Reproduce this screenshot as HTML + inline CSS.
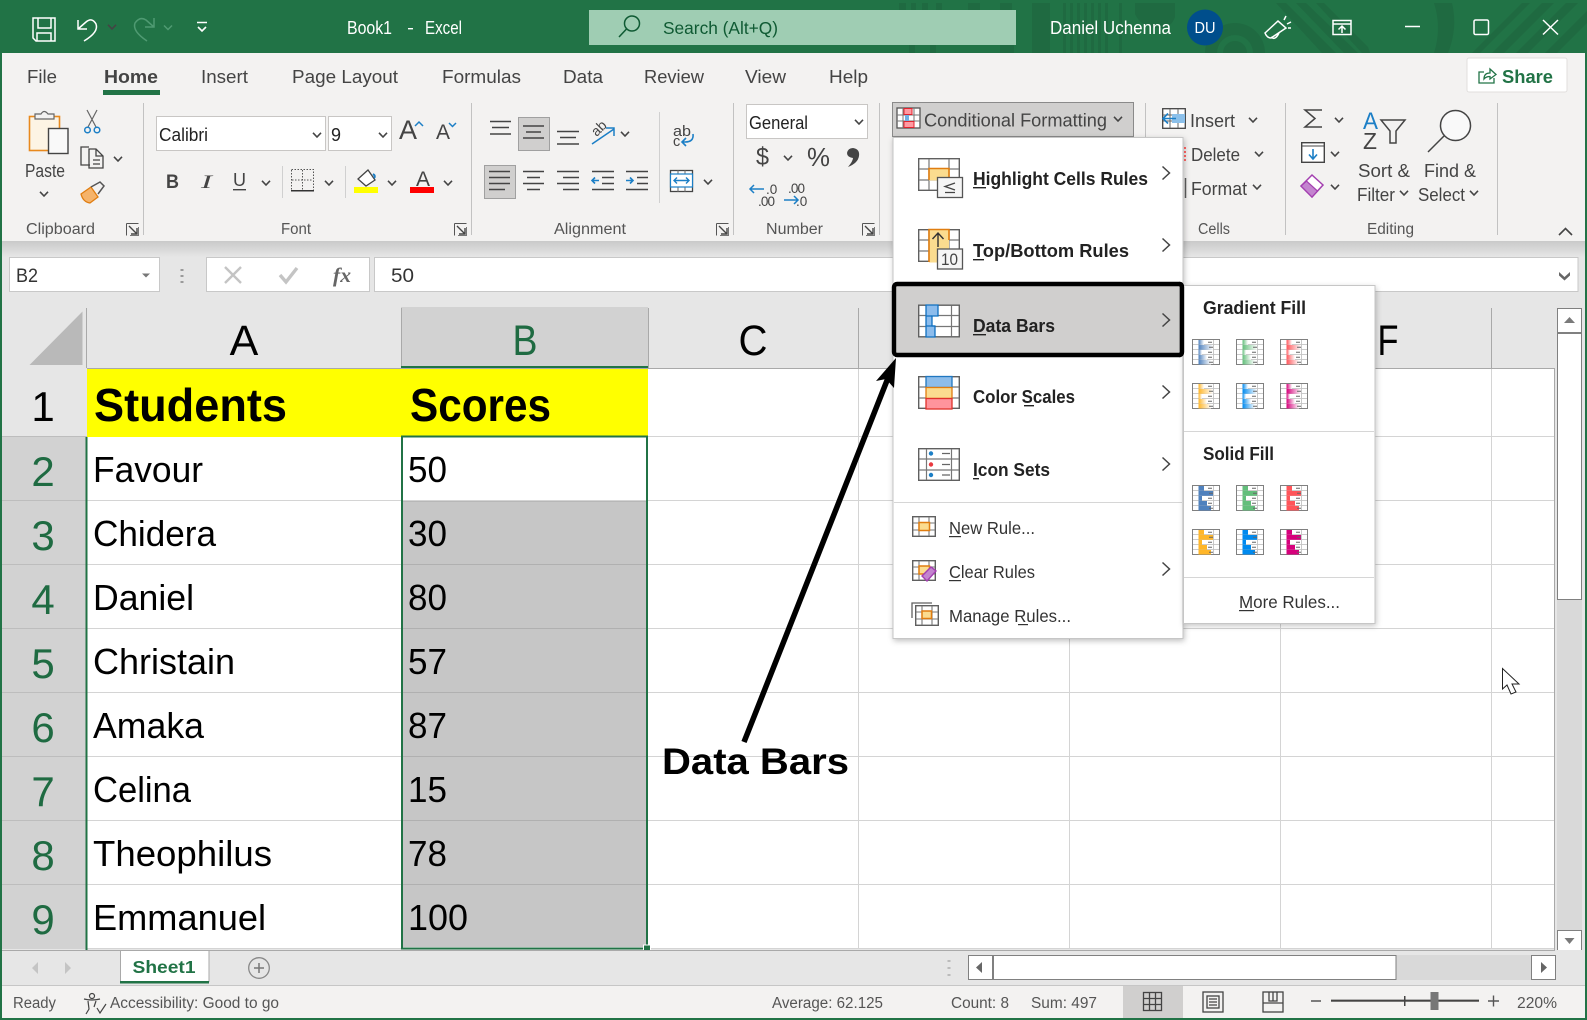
<!DOCTYPE html>
<html><head><meta charset="utf-8"><title>Book1 - Excel</title>
<style>
html,body{margin:0;padding:0;background:#fff;width:1587px;height:1020px;overflow:hidden}
svg{display:block;font-family:"Liberation Sans",sans-serif}
text{white-space:pre}
.t{fill:#fff;font-size:18.5px}
.r{fill:#444;font-size:18px}
.g{fill:#555;font-size:15.5px}
.m{fill:#222;font-size:18.5px;font-weight:700}
.n{fill:#333;font-size:17.5px}
.st{fill:#555;font-size:15.5px}
.cell{fill:#000;font-size:36px}
.hd{fill:#000;font-size:43px;text-anchor:middle}
.rn{fill:#1f6b42;font-size:42px;text-anchor:middle}
.line{stroke:#444;stroke-width:1.6;fill:none}
.ch{stroke:#444;stroke-width:1.6;fill:none}
</style></head><body>
<svg width="1587" height="1020" viewBox="0 0 1587 1020" xmlns="http://www.w3.org/2000/svg">
<defs>
<linearGradient id="sh" x1="0" y1="0" x2="0" y2="1"><stop offset="0" stop-color="#c9c9c9"/><stop offset="1" stop-color="#e6e6e6"/></linearGradient>
<linearGradient id="g1"><stop offset="0" stop-color="#4f81bd"/><stop offset="1" stop-color="#fff"/></linearGradient>
<linearGradient id="g2"><stop offset="0" stop-color="#63be7b"/><stop offset="1" stop-color="#fff"/></linearGradient>
<linearGradient id="g3"><stop offset="0" stop-color="#ff555a"/><stop offset="1" stop-color="#fff"/></linearGradient>
<linearGradient id="g4"><stop offset="0" stop-color="#ffb628"/><stop offset="1" stop-color="#fff"/></linearGradient>
<linearGradient id="g5"><stop offset="0" stop-color="#008aef"/><stop offset="1" stop-color="#fff"/></linearGradient>
<linearGradient id="g6"><stop offset="0" stop-color="#d6007b"/><stop offset="1" stop-color="#fff"/></linearGradient>
<path id="ch" class="ch" d="M-4-2.2 0 2 4-2.2"/>
<path id="sub" d="M-3.5-6.5 3.5 0-3.5 6.5" fill="none" stroke="#444" stroke-width="1.5"/>
<g id="launch"><path d="M.5 .5H12.5M.5 .5V12.5" stroke="#555" fill="none"/><path d="M3 3 10.5 10.5M5 11H11V5" stroke="#444" stroke-width="1.4" fill="none"/><path d="M12.5 4V12.5H4" stroke="#777" fill="none"/></g>
<g id="dbar">
<rect x=".5" y=".5" width="27" height="25" fill="#fff" stroke="#808080"/>
<path d="M7 1V25M21.5 1V25M1 5.6H27M1 10.6H27M1 15.6H27M1 20.6H27" stroke="#c4c4c4" stroke-width=".9" fill="none"/>
<rect x="6.500" y="1" width="5.500" height="4.800" style="fill:var(--c)"/><rect x="6.500" y="6" width="14.500" height="4.800" style="fill:var(--c)"/><rect x="6.500" y="11" width="3.500" height="4.800" style="fill:var(--c)"/><rect x="6.500" y="16" width="8.500" height="4.800" style="fill:var(--c)"/><rect x="6.500" y="21" width="12.500" height="4.500" style="fill:var(--c)"/>
<path d="M16 3.200H20M17 8.200H21M16 13.200H20M16 18.200H20M17 23.200H21" stroke="#666" stroke-width="1"/>
</g>
<g id="grid42"><rect x=".7" y=".7" width="40.6" height="31.6" fill="#fff" stroke="#606060" stroke-width="1.4"/><path d="M8.500 1V32M33.500 1V32M1 11H41M1 22H41" stroke="#777" stroke-width="1.2" fill="none"/></g>
<g id="grid42b"><rect x=".7" y=".7" width="40.6" height="31.6" fill="#fff" stroke="#606060" stroke-width="1.4"/><path d="M11 1V32M31 1V32M1 11H41M1 22H41" stroke="#777" stroke-width="1.2" fill="none"/></g>
<g id="grid24"><rect x=".7" y=".7" width="22.6" height="19.6" fill="#fff" stroke="#606060" stroke-width="1.4"/><path d="M7 1V20M17 1V20M1 7H23M1 14H23" stroke="#777" stroke-width="1.1" fill="none"/></g>
</defs>

<rect width="1587" height="1020" fill="#217346"/>
<!-- title pattern -->
<g fill="#1f6a41">
<rect x="899" y="3" width="7" height="7"/><rect x="911" y="3" width="5" height="7"/><rect x="922" y="3" width="6" height="7"/><rect x="936" y="3" width="6" height="7"/><rect x="968" y="3" width="12" height="7"/><rect x="1000" y="3" width="12" height="7"/>
<rect x="909" y="45" width="6" height="8"/><rect x="930" y="45" width="6" height="8"/><rect x="1000" y="45" width="14" height="8"/>
<rect x="1032" y="3" width="18" height="50"/>
<rect x="1063" y="3" width="3" height="50"/><rect x="1070" y="3" width="3" height="50"/><rect x="1077" y="3" width="3" height="50"/><rect x="1084" y="3" width="3" height="50"/><rect x="1091" y="3" width="3" height="50"/><rect x="1098" y="3" width="3" height="50"/><rect x="1105" y="3" width="3" height="50"/><rect x="1119" y="3" width="3" height="50"/>
<path d="M1135 3h40v14q-4 12-18 11-16-1-22-14z"/>
<path d="M1205 53a30 30 0 0 1 60 0h-12a18 18 0 0 0-36 0z"/>
<path d="M1223 53a12 12 0 0 1 24 0z"/>
<path d="M1276 3h10l50 50h-14zM1296 3h10l52 50h-14zM1316 3h8l44 44 2 6h-8z"/>
<path d="M1434 3h18q6 25-4 50h-14q8-25 0-50z"/>
<path d="M1472 53 1522 3h8l-50 50zM1492 53 1542 3h12l-50 50zM1516 53 1566 3h12l-50 50zM1545 53l42-42v12l-30 30z"/>
</g>
<!-- QAT -->
<g fill="none" stroke="#fff" stroke-width="1.5">
<path d="M33 18H55V41H36L33 38Z"/><path d="M38 18V28H51V18M37 41V33H51V41"/>
<path d="M78 20V29H87M78 29 86 22Q92 17 96 24 99 32 84 41"/>
</g>
<use href="#ch" transform="translate(112,27)" style="stroke:#fff"/>
<g fill="none" stroke="#4f9a72" stroke-width="1.5"><path d="M154 18V27H145M154 27 146 20Q140 16 135 23 132 31 147 41"/></g>
<path d="M164 25.500 168 29.500 172 25.500" fill="none" stroke="#4f9a72" stroke-width="1.5"/>
<path d="M197 22.500H207M198 27 202 31 206 27" fill="none" stroke="#fff" stroke-width="1.6"/>
<text class="t" x="347" y="34" textLength="45" lengthAdjust="spacingAndGlyphs">Book1</text>
<rect x="408" y="28" width="5" height="1.4" fill="#fff"/>
<text class="t" x="425" y="34" textLength="37" lengthAdjust="spacingAndGlyphs">Excel</text>
<rect x="589" y="10" width="427" height="35" fill="#9fcdb3"/>
<g fill="none" stroke="#0f5a33" stroke-width="1.5"><circle cx="632" cy="23.500" r="7.500"/><path d="M626.500 29 619 37"/></g>
<text x="663" y="34" font-size="17.500" fill="#0f5a33" textLength="115" lengthAdjust="spacingAndGlyphs">Search (Alt+Q)</text>
<text class="t" x="1050" y="34" textLength="121" lengthAdjust="spacingAndGlyphs">Daniel Uchenna</text>
<circle cx="1205" cy="27.500" r="18" fill="#004e8c"/>
<text x="1205" y="33" font-size="15.500" fill="#fff" text-anchor="middle" textLength="21" lengthAdjust="spacingAndGlyphs">DU</text>
<g fill="none" stroke="#fff" stroke-width="1.5">
<path d="M1265 33 1278 21 1286 28 1271 38Q1267 38 1265 33ZM1271 37Q1275 41 1279 33"/><path d="M1284 20 1286 16M1287 24 1291 22M1288 28H1291"/>
<rect x="1333" y="20.500" width="18" height="14"/><path d="M1333 24H1351M1342 33V26M1338.500 29.500 1342 26 1345.500 29.500"/>
<path d="M1405 26.500H1420"/><rect x="1474" y="20" width="14.500" height="14.500" rx="1.5"/><path d="M1543 20 1558 34.500M1558 20 1543 34.500"/>
</g>

<!-- ribbon -->
<rect x="2" y="53" width="1583" height="188" fill="#f3f2f1"/>
<rect x="2" y="241" width="1583" height="709" fill="#e6e6e6"/>
<rect x="2" y="241" width="1583" height="16" fill="url(#sh)"/>
<rect x="1467" y="58" width="100" height="34" rx="2" fill="#fff" stroke="#e1dfdd"/>
<g fill="none" stroke="#217346" stroke-width="1.300"><path d="M1484 72H1479V83H1494V78M1484 79Q1484 73 1490 73V69L1496 74.500 1490 79V76.500Q1486 76.500 1484 79Z"/></g>
<text x="1502" y="83" font-size="18.500" font-weight="700" fill="#217346" textLength="51" lengthAdjust="spacingAndGlyphs">Share</text>

<text class="r" x="27" y="83" textLength="30" lengthAdjust="spacingAndGlyphs">File</text>
<text class="r" x="104" y="83" font-weight="700" fill="#333" textLength="54" lengthAdjust="spacingAndGlyphs">Home</text>
<rect x="103" y="90" width="57" height="5" fill="#217346"/>
<text class="r" x="201" y="83" textLength="47" lengthAdjust="spacingAndGlyphs">Insert</text>
<text class="r" x="292" y="83" textLength="106" lengthAdjust="spacingAndGlyphs">Page Layout</text>
<text class="r" x="442" y="83" textLength="79" lengthAdjust="spacingAndGlyphs">Formulas</text>
<text class="r" x="563" y="83" textLength="40" lengthAdjust="spacingAndGlyphs">Data</text>
<text class="r" x="644" y="83" textLength="60" lengthAdjust="spacingAndGlyphs">Review</text>
<text class="r" x="745" y="83" textLength="41" lengthAdjust="spacingAndGlyphs">View</text>
<text class="r" x="829" y="83" textLength="39" lengthAdjust="spacingAndGlyphs">Help</text>

<!-- separators -->
<path d="M143.500 103V235M471.500 103V235M733.500 103V235M879.500 103V235M1145.500 103V235M1285.500 103V235M1497.500 103V235" stroke="#c2c2c2" stroke-width="1"/>
<path d="M282.500 166V198M345.500 166V198M659.500 112V203" stroke="#d0d0d0"/>

<!-- clipboard -->
<rect x="29.500" y="116.500" width="30" height="34" fill="#fdf4e4" stroke="#e8891d" stroke-width="1.6"/>
<path d="M35 119V114H41Q44 109 48 114H54V119Z" fill="#f3f2f1" stroke="#666" stroke-width="1.2"/>
<rect x="48.500" y="128.500" width="19.500" height="25" fill="#f9f9f9" stroke="#444" stroke-width="1.4"/>
<text class="r" x="25" y="177" textLength="40" lengthAdjust="spacingAndGlyphs">Paste</text>
<use href="#ch" x="44" y="194"/>
<g fill="none" stroke="#666" stroke-width="1.2"><path d="M87 110 96 127M97 110 88 127"/></g>
<g fill="none" stroke="#1c7fc6" stroke-width="1.5"><circle cx="87.500" cy="130" r="2.800"/><circle cx="97" cy="130" r="2.800"/></g>
<g fill="none" stroke="#444" stroke-width="1.3"><path d="M90 165H81V147H89"/><path d="M89 149H96L103 156V168H89ZM96 149V156H103M93 160H100M93 164H100"/></g>
<use href="#ch" x="118" y="159"/>
<path d="M81 194 91 187 98 197 90 203Q83 202 81 194Z" fill="#f5b36a" stroke="#e07d10" stroke-width="1.3"/>
<path d="M91 187 100 182 104 186 98 194" fill="none" stroke="#555" stroke-width="1.5"/>
<text class="g" x="26" y="234" textLength="69" lengthAdjust="spacingAndGlyphs">Clipboard</text>
<use href="#launch" x="126" y="223"/>

<!-- font -->
<rect x="156.500" y="116.500" width="169" height="34" fill="#fff" stroke="#c8c6c4"/>
<rect x="328.500" y="116.500" width="63" height="34" fill="#fff" stroke="#c8c6c4"/>
<text x="159" y="141" font-size="18" fill="#222" textLength="49" lengthAdjust="spacingAndGlyphs">Calibri</text>
<text x="331" y="141" font-size="18" fill="#222" textLength="10" lengthAdjust="spacingAndGlyphs">9</text>
<use href="#ch" x="317" y="135" style="stroke:#222"/><use href="#ch" x="383" y="135" style="stroke:#222"/>
<text x="399" y="139" font-size="27" fill="#444" textLength="18" lengthAdjust="spacingAndGlyphs">A</text>
<path d="M415 126 419 122 423 126" fill="none" stroke="#1c7fc6" stroke-width="1.5"/>
<text x="436" y="139" font-size="21" fill="#444" textLength="14" lengthAdjust="spacingAndGlyphs">A</text>
<path d="M449 123 452.500 126.500 456 123" fill="none" stroke="#1c7fc6" stroke-width="1.5"/>
<text x="166" y="188" font-size="19" font-weight="700" fill="#444" textLength="13" lengthAdjust="spacingAndGlyphs">B</text>
<text x="201" y="188" font-size="19" font-style="italic" fill="#444" font-family="Liberation Serif" textLength="11" lengthAdjust="spacingAndGlyphs">I</text>
<text x="233" y="186" font-size="18" fill="#444" textLength="13" lengthAdjust="spacingAndGlyphs">U</text>
<rect x="233" y="189" width="13" height="1.4" fill="#444"/>
<use href="#ch" x="266" y="183"/>
<g fill="none" stroke="#555" stroke-dasharray="1.5 1.5"><rect x="291.500" y="169.500" width="22" height="21"/><path d="M302.500 170V190M292 180H313"/></g><rect x="291" y="190" width="23" height="1.500" fill="#333"/>
<use href="#ch" x="329" y="183"/>
<path d="M358 179 368 170 375 180 366 186Z" fill="#fff" stroke="#444" stroke-width="1.300"/><path d="M374 178Q376 176 373 174" stroke="#1c7fc6" stroke-width="2" fill="none"/>
<rect x="354" y="187" width="24" height="6" fill="#ff0"/>
<use href="#ch" x="392" y="183"/>
<text x="416" y="186" font-size="21" fill="#444" textLength="14" lengthAdjust="spacingAndGlyphs">A</text>
<rect x="410" y="187" width="24" height="6" fill="#f00"/>
<use href="#ch" x="448" y="183"/>
<text class="g" x="281" y="234" textLength="30" lengthAdjust="spacingAndGlyphs">Font</text>
<use href="#launch" x="454" y="223"/>

<!-- alignment -->
<path class="line" d="M490 121.500H511M492 127.500H509M490 134H511"/>
<rect x="518.500" y="117.500" width="31" height="33" fill="#d0cfce" stroke="#a0a0a0"/>
<path class="line" d="M523 126H544M526 132H541M523 138H544"/>
<path class="line" d="M557 131.500H579M560 137.500H576M557 144H579"/>
<g fill="none"><text x="592" y="134" font-size="14" fill="#444" transform="rotate(-45 598 130)">ab</text><path d="M592 144 614 129M606 128H614V136" stroke="#1c7fc6" stroke-width="1.500"/></g>
<use href="#ch" x="625" y="134"/>
<rect x="484.500" y="165.500" width="31" height="33" fill="#d0cfce" stroke="#a0a0a0"/>
<path class="line" d="M489 171.500H510M489 177.500H510M489 183.500H510M489 189.500H505"/>
<path class="line" d="M523 171.500H544M527 177.500H540M523 183.500H544M527 189.500H540"/>
<path class="line" d="M557 171.500H579M563 177.500H579M557 183.500H579M563 189.500H579"/>
<path class="line" d="M592 171.500H614M602 177.500H614M602 183.500H614M592 189.500H614"/>
<path d="M599 180.500H592M595 177.500 592 180.500 595 183.500" fill="none" stroke="#1c7fc6" stroke-width="1.600"/>
<path class="line" d="M626 171.500H648M637 177.500H648M637 183.500H648M626 189.500H648"/>
<path d="M626 180.500H633M630 177.500 633 180.500 630 183.500" fill="none" stroke="#1c7fc6" stroke-width="1.600"/>
<text x="673" y="136" font-size="14.500" fill="#444" textLength="18" lengthAdjust="spacingAndGlyphs">ab</text>
<text x="673" y="146" font-size="14.500" fill="#444">c</text>
<path d="M693 134Q694 142 685 142H682M686 138 682 142 686 146" fill="none" stroke="#1c7fc6" stroke-width="1.600"/>
<rect x="670.500" y="170.500" width="22" height="21" fill="#fff" stroke="#444" stroke-width="1.300"/>
<path d="M670 175H693M670 186H693M678 170V175M685 170V175M678 186V192M685 186V192" stroke="#666" fill="none"/>
<rect x="670.500" y="174" width="22" height="13" fill="#fff" stroke="#1c7fc6" stroke-width="1.200"/>
<path d="M674 180.500H689M677 177.500 674 180.500 677 183.500M686 177.500 689 180.500 686 183.500" fill="none" stroke="#1c7fc6" stroke-width="1.400"/>
<use href="#ch" x="708" y="182"/>
<text class="g" x="554" y="234" textLength="72" lengthAdjust="spacingAndGlyphs">Alignment</text>
<use href="#launch" x="716" y="223"/>

<!-- number -->
<rect x="746.500" y="104.500" width="121" height="34" fill="#fff" stroke="#c8c6c4"/>
<text x="749" y="129" font-size="18" fill="#222" textLength="59" lengthAdjust="spacingAndGlyphs">General</text>
<use href="#ch" x="859" y="122" style="stroke:#222"/>
<text x="756" y="165" font-size="25" fill="#444" textLength="13" lengthAdjust="spacingAndGlyphs">$</text>
<use href="#ch" x="788" y="158"/>
<text x="807" y="166" font-size="26" fill="#444" textLength="23" lengthAdjust="spacingAndGlyphs">%</text>
<path d="M853 148Q860 149 859 156 858 163 848 167 853 161 853 158 847 157 847 153 848 148 853 148Z" fill="#444"/>
<text x="766" y="194" font-size="13.500" fill="#444">.0</text><text x="758" y="206" font-size="13.500" fill="#444" textLength="17">.00</text>
<path d="M750 189H764M754 185 750 189 754 193" stroke="#1c7fc6" stroke-width="1.500" fill="none"/>
<text x="788" y="193" font-size="13.500" fill="#444" textLength="17">.00</text><text x="796" y="206" font-size="13.500" fill="#444">.0</text>
<path d="M784 200H798M794 196 798 200 794 204" stroke="#1c7fc6" stroke-width="1.500" fill="none"/>
<text class="g" x="766" y="234" textLength="57" lengthAdjust="spacingAndGlyphs">Number</text>
<use href="#launch" x="862" y="223"/>

<!-- cells -->
<rect x="1162.700" y="108.700" width="22.600" height="19.600" fill="#fff" stroke="#444" stroke-width="1.300"/>
<path d="M1170 109V128M1178 109V128M1163 115H1185M1163 121H1185" stroke="#666"/>
<rect x="1172" y="114" width="13" height="9" fill="#8cc0ea"/>
<path d="M1176 118.500H1163M1168 113.500 1163 118.500 1168 123.500" fill="none" stroke="#1c7fc6" stroke-width="1.600"/>
<text class="r" x="1190" y="127" textLength="45" lengthAdjust="spacingAndGlyphs">Insert</text><use href="#ch" x="1253" y="120"/>
<text class="r" x="1191" y="161" textLength="49" lengthAdjust="spacingAndGlyphs">Delete</text><use href="#ch" x="1259" y="154"/>
<text class="r" x="1191" y="195" textLength="56" lengthAdjust="spacingAndGlyphs">Format</text><use href="#ch" x="1257" y="187"/>
<text class="g" x="1198" y="234" textLength="32" lengthAdjust="spacingAndGlyphs">Cells</text>

<!-- editing -->
<path d="M1322 110H1305L1315 118.500 1305 127H1322" fill="none" stroke="#444" stroke-width="1.500"/>
<use href="#ch" x="1339" y="120"/>
<rect x="1301.700" y="142.700" width="22.600" height="19.600" fill="#fff" stroke="#444" stroke-width="1.400"/><path d="M1302 146H1324" stroke="#444"/><path d="M1313 149V158M1309 154.500 1313 159 1317 154.500" fill="none" stroke="#1c7fc6" stroke-width="1.600"/>
<use href="#ch" x="1335" y="154"/>
<path d="M1301 186 1312 175 1323 185 1312 197Z" fill="#fff" stroke="#a33fb0" stroke-width="1.500"/><path d="M1301 186 1306.500 181 1317.500 191 1312 197Z" fill="#c384cf" stroke="#a33fb0" stroke-width="1.200"/>
<use href="#ch" x="1335" y="187"/>
<text x="1363" y="129" font-size="24" fill="#1c7fc6" textLength="15" lengthAdjust="spacingAndGlyphs">A</text>
<text x="1363" y="149" font-size="23" fill="#444" textLength="14" lengthAdjust="spacingAndGlyphs">Z</text>
<path d="M1381 120H1405L1396 131V143H1390V131Z" fill="none" stroke="#444" stroke-width="1.500"/>
<circle cx="1455.500" cy="125.500" r="15" fill="#f9f9f9" stroke="#444" stroke-width="1.500"/><path d="M1444 136 1428 152" stroke="#444" stroke-width="1.500"/>
<text class="r" x="1358" y="177" textLength="52" lengthAdjust="spacingAndGlyphs">Sort &amp;</text>
<text class="r" x="1357" y="201" textLength="38" lengthAdjust="spacingAndGlyphs">Filter</text><use href="#ch" x="1404" y="193"/>
<text class="r" x="1424" y="177" textLength="52" lengthAdjust="spacingAndGlyphs">Find &amp;</text>
<text class="r" x="1418" y="201" textLength="47" lengthAdjust="spacingAndGlyphs">Select</text><use href="#ch" x="1474" y="193"/>
<text class="g" x="1367" y="234" textLength="47" lengthAdjust="spacingAndGlyphs">Editing</text>
<path d="M1559 235 1565.500 228.500 1572 235" fill="none" stroke="#444" stroke-width="1.600"/>

<!-- formula bar -->
<rect x="9.500" y="257.500" width="150" height="34" fill="#fff" stroke="#c8c8c8"/>
<text x="16" y="282" font-size="19" fill="#333" textLength="22" lengthAdjust="spacingAndGlyphs">B2</text>
<path d="M142 273.500H150L146 277.500Z" fill="#777"/>
<path d="M182 269V271M182 275V277M182 281V283" stroke="#9a9a9a" stroke-width="3"/>
<rect x="206.500" y="257.500" width="163" height="34" fill="#fff" stroke="#c8c8c8"/>
<path d="M225 267 241 283M241 267 225 283" stroke="#c4c4c4" stroke-width="2.400"/>
<path d="M280 275 286 282 297 268" stroke="#c4c4c4" stroke-width="3.400" fill="none"/>
<text x="333" y="282" font-size="21" font-style="italic" font-weight="700" font-family="Liberation Serif" fill="#666" textLength="18" lengthAdjust="spacingAndGlyphs">fx</text>
<rect x="374.500" y="257.500" width="1203.500" height="34" fill="#fff" stroke="#c8c8c8"/>
<text x="391" y="282" font-size="19" fill="#333" textLength="23" lengthAdjust="spacingAndGlyphs">50</text>
<path d="M1559 272 1564.500 277 1570 272V275.500L1564.500 280.500 1559 275.500Z" fill="#666"/>

<!-- sheet -->
<rect x="87" y="368" width="1467" height="581" fill="#fff"/>
<rect x="401" y="307" width="247" height="61" fill="#d2d2d2"/>
<rect x="2" y="437" width="85" height="512" fill="#d2d2d2"/>
<rect x="87" y="368" width="561" height="69" fill="#ff0"/>
<rect x="403" y="501" width="243" height="446" fill="#c6c6c6"/>
<path d="M29.500 365 82.500 311.500V365Z" fill="#b9b9b9"/>
<g stroke="#d4d4d4" fill="none">
<path d="M648 436.500H1554M87 500.500H401M648 500.500H1554M87 564.500H401M648 564.500H1554M87 628.500H401M648 628.500H1554M87 692.500H401M648 692.500H1554M87 756.500H401M648 756.500H1554M87 820.500H401M648 820.500H1554M87 884.500H401M648 884.500H1554M87 948.500H1554"/>
<path d="M858.500 368V949M1069.500 368V949M1280.500 368V949M1491.500 368V949"/>
<path d="M2 500.500H87M2 564.500H87M2 628.500H87M2 692.500H87M2 756.500H87M2 820.500H87M2 884.500H87M2 436.500H87" stroke="#bdbdbd"/>
<path d="M403 564.500H646M403 628.500H646M403 692.500H646M403 756.500H646M403 820.500H646M403 884.500H646" stroke="#b0b0b0"/>
<path d="M403 501H646" stroke="#a8a8a8"/>
</g>
<path d="M87 368.500H1554M1554.500 368V950M858.500 308V368M1069.500 308V368M1280.500 308V368M1491.500 308V368M648.500 308V368M401.500 308V368M86.500 308V368" stroke="#a9a9a9" fill="none"/>
<rect x="401" y="366" width="247" height="2" fill="#217346"/>
<rect x="85.500" y="437" width="2" height="513" fill="#217346"/>
<rect x="402" y="436.500" width="245" height="512" fill="none" stroke="#217346" stroke-width="2"/>
<rect x="643.500" y="945" width="7" height="7" fill="#217346" stroke="#fff"/>

<text class="hd" x="244" y="355">A</text>
<text class="hd" x="525" y="355" style="fill:#1f6b42" textLength="25" lengthAdjust="spacingAndGlyphs">B</text>
<text class="hd" x="753" y="355" textLength="29" lengthAdjust="spacingAndGlyphs">C</text>
<text class="hd" x="1388" y="355" textLength="21" lengthAdjust="spacingAndGlyphs">F</text>
<text class="rn" x="43" y="421" style="fill:#000">1</text>
<text class="rn" x="43" y="486">2</text><text class="rn" x="43" y="550">3</text><text class="rn" x="43" y="614">4</text><text class="rn" x="43" y="678">5</text><text class="rn" x="43" y="742">6</text><text class="rn" x="43" y="806">7</text><text class="rn" x="43" y="870">8</text><text class="rn" x="43" y="934">9</text>

<text x="94" y="421" font-size="46" font-weight="700" fill="#000" textLength="193" lengthAdjust="spacingAndGlyphs">Students</text>
<text x="410" y="421" font-size="46" font-weight="700" fill="#000" textLength="141" lengthAdjust="spacingAndGlyphs">Scores</text>
<text class="cell" x="93" y="482" textLength="110" lengthAdjust="spacingAndGlyphs">Favour</text>
<text class="cell" x="93" y="546" textLength="123" lengthAdjust="spacingAndGlyphs">Chidera</text>
<text class="cell" x="93" y="610" textLength="101" lengthAdjust="spacingAndGlyphs">Daniel</text>
<text class="cell" x="93" y="674" textLength="142" lengthAdjust="spacingAndGlyphs">Christain</text>
<text class="cell" x="93" y="738" textLength="111" lengthAdjust="spacingAndGlyphs">Amaka</text>
<text class="cell" x="93" y="802" textLength="98" lengthAdjust="spacingAndGlyphs">Celina</text>
<text class="cell" x="93" y="866" textLength="179" lengthAdjust="spacingAndGlyphs">Theophilus</text>
<text class="cell" x="93" y="930" textLength="173" lengthAdjust="spacingAndGlyphs">Emmanuel</text>
<text class="cell" x="408" y="482" textLength="39" lengthAdjust="spacingAndGlyphs">50</text>
<text class="cell" x="408" y="546" textLength="39" lengthAdjust="spacingAndGlyphs">30</text>
<text class="cell" x="408" y="610" textLength="39" lengthAdjust="spacingAndGlyphs">80</text>
<text class="cell" x="408" y="674" textLength="39" lengthAdjust="spacingAndGlyphs">57</text>
<text class="cell" x="408" y="738" textLength="39" lengthAdjust="spacingAndGlyphs">87</text>
<text class="cell" x="408" y="802" textLength="39" lengthAdjust="spacingAndGlyphs">15</text>
<text class="cell" x="408" y="866" textLength="39" lengthAdjust="spacingAndGlyphs">78</text>
<text class="cell" x="408" y="930" textLength="60" lengthAdjust="spacingAndGlyphs">100</text>

<!-- vertical scrollbar -->
<rect x="1557" y="333" width="25" height="619" fill="#d9d9d9"/>
<rect x="1557.500" y="308.500" width="24" height="24" fill="#fff" stroke="#808080"/>
<path d="M1564 323H1575L1569.500 317Z" fill="#7a7a7a"/>
<rect x="1557.500" y="333.500" width="24" height="266" fill="#fff" stroke="#808080"/>
<rect x="1557.500" y="930.500" width="24" height="21" fill="#fff" stroke="#808080"/>
<path d="M1564.500 938H1574.500L1569.500 944Z" fill="#7a7a7a"/>
<!-- cursor -->
<path d="M1502.500 668.500V689L1507 685 1511 694 1516 692 1512 684H1519Z" fill="#fff" stroke="#222"/>

<!-- tabs -->
<rect x="2" y="950" width="1583" height="36" fill="#e6e6e6"/>
<path d="M2 950.500H1555" stroke="#a9a9a9"/>
<path d="M38 962V974L32 968ZM65 962V974L71 968Z" fill="#c4c4c4"/>
<rect x="120.500" y="951" width="88.500" height="30" fill="#fff"/>
<path d="M120.500 951V982M209 951V982" stroke="#a9a9a9"/>
<rect x="120" y="981" width="89" height="2.500" fill="#217346"/>
<text x="132.500" y="973" font-size="17.500" font-weight="700" fill="#217346" textLength="63" lengthAdjust="spacingAndGlyphs">Sheet1</text>
<circle cx="259" cy="968" r="10.300" fill="none" stroke="#888" stroke-width="1.300"/><path d="M254 968H264M259 963V973" stroke="#777" stroke-width="1.500"/>
<path d="M949 960V962M949 967V969M949 974V976" stroke="#bbb" stroke-width="3"/>
<rect x="968" y="955" width="588" height="25" fill="#d9d9d9"/>
<rect x="968.500" y="955.500" width="24" height="24" fill="#fff" stroke="#808080"/>
<path d="M982 962V973L976 967.500Z" fill="#666"/>
<rect x="993.500" y="955.500" width="402.500" height="24" fill="#fff" stroke="#808080"/>
<rect x="1531.500" y="955.500" width="24" height="24" fill="#fff" stroke="#808080"/>
<path d="M1541 962V973L1547 967.500Z" fill="#666"/>

<!-- status bar -->
<rect x="2" y="985.500" width="1583" height="32.500" fill="#f3f2f1"/>
<path d="M2 985.500H1585" stroke="#c6c6c6"/>
<text class="st" x="13" y="1008" textLength="43" lengthAdjust="spacingAndGlyphs">Ready</text>
<g fill="none" stroke="#444" stroke-width="1.200"><circle cx="92" cy="996" r="2.500"/><path d="M84 999Q92 1001 100 999M88 1001 89 1009 86 1014M96 1001 94 1007M97 1008 100 1013 106 1004"/></g>
<text class="st" x="110" y="1008" textLength="169" lengthAdjust="spacingAndGlyphs">Accessibility: Good to go</text>
<text class="st" x="772" y="1008" textLength="111" lengthAdjust="spacingAndGlyphs">Average: 62.125</text>
<text class="st" x="951" y="1008" textLength="58" lengthAdjust="spacingAndGlyphs">Count: 8</text>
<text class="st" x="1031" y="1008" textLength="66" lengthAdjust="spacingAndGlyphs">Sum: 497</text>
<rect x="1123" y="986" width="60" height="32" fill="#d0cfce"/>
<g fill="none" stroke="#444" stroke-width="1.300">
<rect x="1143.500" y="992.500" width="18" height="18"/><path d="M1149.500 992V1011M1155.500 992V1011M1143 998.500H1162M1143 1004.500H1162"/>
<rect x="1203" y="992" width="20" height="20"/><rect x="1207" y="996" width="12" height="12"/><path d="M1209 999H1217M1209 1002H1217M1209 1005H1217"/>
<rect x="1263" y="992" width="20" height="20"/><path d="M1263 1003H1283M1269 992V1001H1277V992M1273 992V1001"/>
</g>
<path d="M1311 1001H1321M1331 1001H1479M1488 1001H1499M1493.500 995.500V1006.500" stroke="#555" stroke-width="1.400"/>
<path d="M1331 1000.500H1479" stroke="#444" stroke-width="1.800"/>
<rect x="1404" y="996" width="1.500" height="10" fill="#444"/>
<rect x="1430.500" y="992" width="8" height="18" fill="#777"/>
<text class="st" x="1517" y="1008" textLength="40" lengthAdjust="spacingAndGlyphs">220%</text>
<rect x="0" y="1018" width="1587" height="2" fill="#217346"/>

<!-- conditional formatting button -->
<rect x="892.500" y="102.500" width="241" height="34" fill="#d0cfce" stroke="#8a8a8a"/>
<rect x="897" y="108" width="23" height="20" fill="#fff" stroke="#555" stroke-width="1.300"/>
<path d="M903 108V128M914 108V128M897 115H920M897 121H920" stroke="#777"/>
<rect x="904" y="108.500" width="8" height="6" fill="#ff9aa2" stroke="#e0242f"/>
<rect x="904" y="121.500" width="10" height="6" fill="#ff9aa2" stroke="#e0242f"/>
<rect x="905" y="115" width="4" height="6" fill="#6fb1e6"/>
<text x="924" y="126.500" font-size="18" fill="#444" textLength="183" lengthAdjust="spacingAndGlyphs">Conditional Formatting</text>
<use href="#ch" x="1118" y="119"/>

<!-- main menu -->
<rect x="893" y="137.500" width="290" height="501" fill="#fff" stroke="#c6c6c6" style="filter:drop-shadow(1px 2px 3px rgba(0,0,0,.25))"/>
<path d="M1185 147V162" stroke="#e33" stroke-width="1.500" stroke-dasharray="2 2"/>
<path d="M1185.500 178V198" stroke="#555" stroke-width="1.500"/>
<use href="#grid42b" x="918" y="158"/>
<rect x="929" y="168.500" width="20" height="12" fill="#fbdc8f"/><path d="M929 180V168.500H949V177" fill="none" stroke="#e07d10" stroke-width="1.600"/>
<rect x="937.500" y="177.500" width="25" height="20" fill="#f5f5f5" stroke="#555" stroke-width="1.300"/>
<path d="M955 183 945 186.500 955 190M945 192.500H955" fill="none" stroke="#444" stroke-width="1.300"/>
<text class="m" x="973" y="185" textLength="175" lengthAdjust="spacingAndGlyphs">Highlight Cells Rules</text><rect x="973" y="187" width="13" height="1.400" fill="#222"/>
<use href="#sub" x="1166" y="173"/>

<use href="#grid42b" x="918" y="229"/>
<rect x="929" y="229.500" width="20" height="33" fill="#fbdc8f"/><path d="M929 262V229.500H949V240" fill="none" stroke="#e07d10" stroke-width="1.600"/>
<path d="M938 247V233M932.500 239 938 233 943.500 239" fill="none" stroke="#333" stroke-width="1.400"/>
<rect x="937.500" y="249" width="25" height="20" fill="#f5f5f5" stroke="#555" stroke-width="1.300"/>
<text x="941" y="265" font-size="16.500" fill="#444" textLength="17" lengthAdjust="spacingAndGlyphs">10</text>
<text class="m" x="973" y="257" textLength="156" lengthAdjust="spacingAndGlyphs">Top/Bottom Rules</text><rect x="973" y="259" width="11" height="1.400" fill="#222"/>
<use href="#sub" x="1166" y="245"/>

<!-- data bars item -->
<rect x="894" y="284" width="288" height="71" rx="3" fill="#d0cfce" stroke="#000" stroke-width="4.400"/>
<use href="#grid42" x="918" y="304.500"/>
<path d="M926 305H938V316H932V326H935V337H926Z" fill="#8cbcec" stroke="#1070c0" stroke-width="1.300"/>
<path d="M926 316H932M926 326H935" stroke="#1070c0" stroke-width="1.300"/>
<text class="m" x="973" y="332" textLength="82" lengthAdjust="spacingAndGlyphs">Data Bars</text><rect x="973" y="334" width="13" height="1.400" fill="#222"/>
<use href="#sub" x="1166" y="320"/>

<!-- color scales -->
<use href="#grid42" x="918" y="376"/>
<rect x="926" y="376.500" width="26" height="11" fill="#8dbdea" stroke="#1f77c0" stroke-width="1.300"/>
<rect x="926" y="387.500" width="26" height="11" fill="#fbdc8f" stroke="#e07d10" stroke-width="1.300"/>
<rect x="926" y="398.500" width="26" height="10.500" fill="#ff949c" stroke="#e0312a" stroke-width="1.300"/>
<text class="m" x="973" y="403" textLength="102" lengthAdjust="spacingAndGlyphs">Color Scales</text><rect x="1024" y="405" width="10" height="1.400" fill="#222"/>
<use href="#sub" x="1166" y="392"/>

<!-- icon sets -->
<use href="#grid42" x="918" y="448"/>
<circle cx="931" cy="453.500" r="2.200" fill="#1c7fc6"/><circle cx="931" cy="464.500" r="2.200" fill="#e9393f"/><circle cx="931" cy="475" r="2.200" fill="#1c7fc6"/>
<path d="M942 453.500H950M942 464.500H950M942 475H950" stroke="#666" stroke-width="1.300"/>
<text class="m" x="973" y="476" textLength="77" lengthAdjust="spacingAndGlyphs">Icon Sets</text><rect x="973" y="478" width="6" height="1.400" fill="#222"/>
<use href="#sub" x="1166" y="464"/>

<path d="M894 502.500H1182" stroke="#d6d6d6"/>
<use href="#grid24" x="912" y="516"/>
<rect x="919" y="522.500" width="10.500" height="8" fill="#fbdc8f" stroke="#e07d10" stroke-width="1.500"/>
<text class="n" x="949" y="534" textLength="86" lengthAdjust="spacingAndGlyphs">New Rule...</text><rect x="949" y="536" width="12" height="1.200" fill="#333"/>
<use href="#grid24" x="912" y="560"/>
<rect x="919" y="566" width="10.500" height="8" fill="#fbdc8f" stroke="#e07d10" stroke-width="1.500"/>
<path d="M922 576 931 567 936 571 927 581Z" fill="#c384cf" stroke="#a33fb0" stroke-width="1.400"/>
<text class="n" x="949" y="578" textLength="86" lengthAdjust="spacingAndGlyphs">Clear Rules</text><rect x="949" y="580" width="12" height="1.200" fill="#333"/>
<use href="#sub" x="1166" y="569"/>
<path d="M912 618V603H932" fill="none" stroke="#606060" stroke-width="1.300"/>
<use href="#grid24" x="915" y="605"/>
<rect x="922" y="611" width="9.500" height="7.500" fill="#fbdc8f" stroke="#e07d10" stroke-width="1.500"/>
<text class="n" x="949" y="622" textLength="122" lengthAdjust="spacingAndGlyphs">Manage Rules...</text><rect x="1018" y="624" width="10" height="1.200" fill="#333"/>

<!-- submenu -->
<rect x="1183.500" y="285.500" width="191.500" height="338" fill="#fff" stroke="#c6c6c6" style="filter:drop-shadow(1px 2px 3px rgba(0,0,0,.22))"/>
<text class="m" x="1203" y="314" textLength="103" lengthAdjust="spacingAndGlyphs">Gradient Fill</text>
<use href="#dbar" x="1192" y="339" style="--c:url(#g1)"/><use href="#dbar" x="1236" y="339" style="--c:url(#g2)"/><use href="#dbar" x="1280" y="339" style="--c:url(#g3)"/>
<use href="#dbar" x="1192" y="383" style="--c:url(#g4)"/><use href="#dbar" x="1236" y="383" style="--c:url(#g5)"/><use href="#dbar" x="1280" y="383" style="--c:url(#g6)"/>
<path d="M1184 431.500H1374M1184 577.500H1374" stroke="#d6d6d6"/>
<text class="m" x="1203" y="460" textLength="71" lengthAdjust="spacingAndGlyphs">Solid Fill</text>
<use href="#dbar" x="1192" y="485" style="--c:#4f81bd"/><use href="#dbar" x="1236" y="485" style="--c:#63be7b"/><use href="#dbar" x="1280" y="485" style="--c:#ff555a"/>
<use href="#dbar" x="1192" y="529" style="--c:#ffb628"/><use href="#dbar" x="1236" y="529" style="--c:#008aef"/><use href="#dbar" x="1280" y="529" style="--c:#d6007b"/>
<text class="n" x="1239" y="608" textLength="101" lengthAdjust="spacingAndGlyphs">More Rules...</text><rect x="1239" y="610" width="15" height="1.200" fill="#333"/>
<!-- re-assert black highlight edge over submenu -->
<path d="M1179 284H1179.500Q1182 284 1182 287V352Q1182 355 1179.500 355H1179" fill="none" stroke="#000" stroke-width="4.400"/>

<!-- arrow -->
<path d="M744 742 888 378" stroke="#000" stroke-width="5.500" fill="none"/>
<path d="M896 358 876 381 886 379 894 388Z" fill="#000"/>
<text x="662" y="774" font-size="37.500" font-weight="700" fill="#000" textLength="187" lengthAdjust="spacingAndGlyphs">Data Bars</text>
<rect x="0" y="53" width="2" height="967" fill="#217346"/>
<rect x="1585" y="53" width="2" height="967" fill="#217346"/>
</svg>
</body></html>
